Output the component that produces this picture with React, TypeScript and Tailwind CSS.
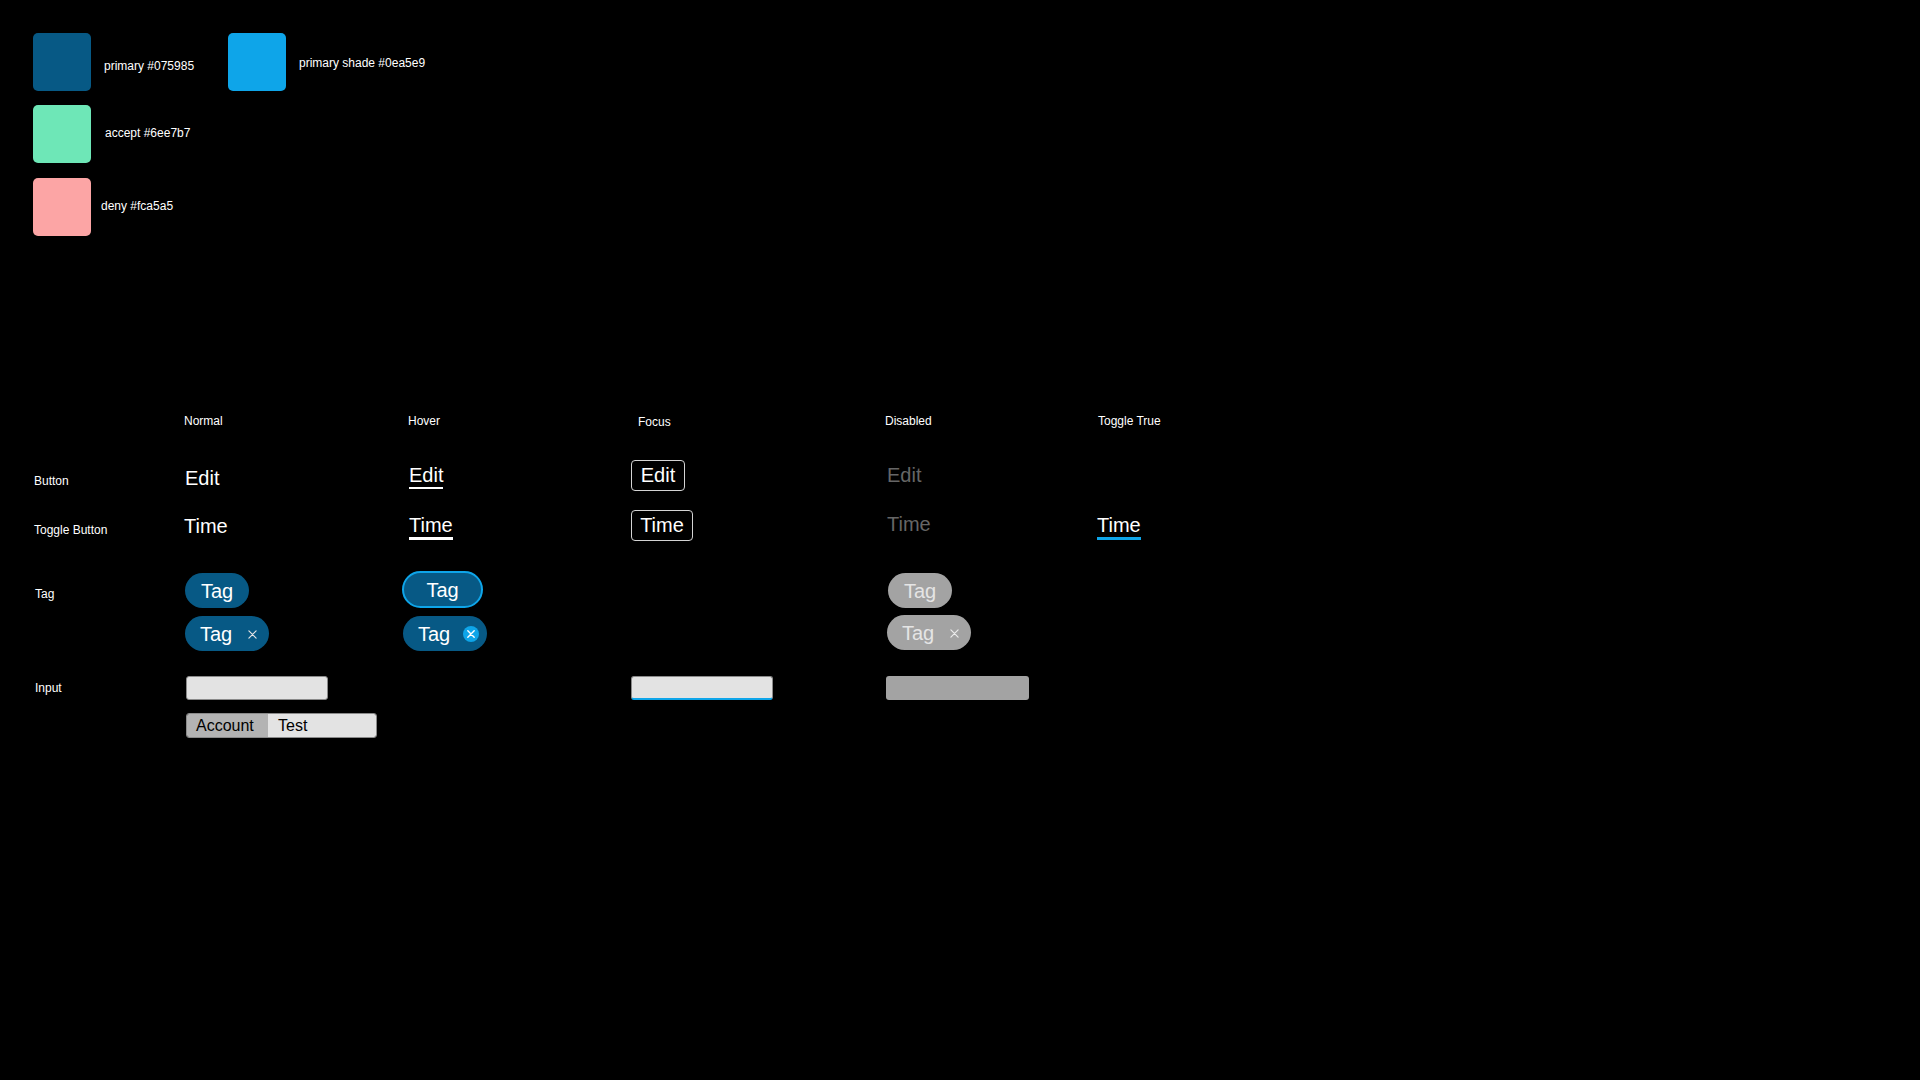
import React from "react";

const XIcon = ({ size = 9, color = "#e5e5e5", stroke = 1.3 }: { size?: number; color?: string; stroke?: number }) => (
  <svg width={size} height={size} viewBox="0 0 10 10" fill="none">
    <path d="M1 1 L9 9 M9 1 L1 9" stroke={color} strokeWidth={stroke} strokeLinecap="round" />
  </svg>
);

const CircleX = () => (
  <svg width={16} height={16} viewBox="0 0 16 16" fill="none">
    <circle cx="8" cy="8" r="8" fill="#0ea5e9" />
    <path d="M4.8 4.8 L11.2 11.2 M11.2 4.8 L4.8 11.2" stroke="#ffffff" strokeWidth={1.4} strokeLinecap="round" />
  </svg>
);

export default function App() {
  return (
    <div className="w-full h-[1080px] bg-black text-white overflow-hidden" style={{ fontFamily: '"Liberation Sans", Arial, sans-serif' }}>
      {/* Swatches */}
      <div className="pt-[33px] pl-[33px] text-[12px] leading-[14px]">
        <div className="flex">
          <div className="flex w-[195px]">
            <div className="w-[58px] h-[58px] rounded-[5px] bg-[#075985]" />
            <div className="ml-[13px] mt-[26px]">primary #075985</div>
          </div>
          <div className="flex">
            <div className="w-[58px] h-[58px] rounded-[5px] bg-[#0ea5e9]" />
            <div className="ml-[13px] mt-[23px]">primary shade #0ea5e9</div>
          </div>
        </div>
        <div className="flex mt-[14px]">
          <div className="w-[58px] h-[58px] rounded-[5px] bg-[#6ee7b7]" />
          <div className="ml-[14px] mt-[21px]">accept #6ee7b7</div>
        </div>
        <div className="flex mt-[15px]">
          <div className="w-[58px] h-[58px] rounded-[5px] bg-[#fca5a5]" />
          <div className="ml-[10px] mt-[21px]">deny #fca5a5</div>
        </div>
      </div>

      {/* States table */}
      <div className="mt-[178px] pl-[34px] grid grid-cols-[150px_224px_222px_256px_211px_auto] grid-rows-[46px_50px_61px_105px_70px] items-start">
        {/* Header */}
        <div />
        <div className="text-[12px] leading-[14px]">Normal</div>
        <div className="text-[12px] leading-[14px]">Hover</div>
        <div className="text-[12px] leading-[14px] ml-[8px] mt-[1px]">Focus</div>
        <div className="text-[12px] leading-[14px] ml-[-1px]">Disabled</div>
        <div className="text-[12px] leading-[14px] ml-[1px]">Toggle True</div>

        {/* Button */}
        <div className="text-[12px] leading-[14px] mt-[14px]">Button</div>
        <div className="mt-[7px] ml-[1px]">
          <span className="text-[20px] leading-[23px] inline-block">Edit</span>
        </div>
        <div className="mt-[4px] ml-[1px]">
          <span className="text-[20px] leading-[23px] inline-block border-b-[2px] border-white">Edit</span>
        </div>
        <div className="ml-[1px]">
          <div className="w-[54px] h-[31px] py-[3px] border border-[#d4d4d4] rounded-[4px] text-[20px] leading-[23px] text-center">Edit</div>
        </div>
        <div className="mt-[4px] ml-[1px]">
          <span className="text-[20px] leading-[23px] inline-block text-[#666666]">Edit</span>
        </div>
        <div />

        {/* Toggle Button */}
        <div className="text-[12px] leading-[14px] mt-[13px]">Toggle Button</div>
        <div className="mt-[5px]">
          <span className="text-[20px] leading-[23px] inline-block">Time</span>
        </div>
        <div className="mt-[4px] ml-[1px]">
          <span className="text-[20px] leading-[23px] inline-block border-b-[3px] border-white">Time</span>
        </div>
        <div className="ml-[1px]">
          <div className="w-[62px] h-[31px] py-[3px] border border-[#d4d4d4] rounded-[4px] text-[20px] leading-[23px] text-center">Time</div>
        </div>
        <div className="mt-[3px] ml-[1px]">
          <span className="text-[20px] leading-[23px] inline-block text-[#666666]">Time</span>
        </div>
        <div className="mt-[4px]">
          <span className="text-[20px] leading-[23px] inline-block border-b-[3px] border-[#0ea5e9]">Time</span>
        </div>

        {/* Tag */}
        <div className="text-[12px] leading-[14px] mt-[16px] ml-[1px]">Tag</div>
        <div className="mt-[2px] ml-[1px] flex flex-col items-start gap-[8px]">
          <div className="w-[64px] h-[35px] rounded-full bg-[#075985] flex items-center justify-center text-[20px] leading-[23px] pt-[1px]">Tag</div>
          <div className="w-[84px] h-[35px] rounded-full bg-[#075985] flex items-center pl-[15px] text-[20px] leading-[23px] pt-[1px]">
            <span>Tag</span>
            <span className="ml-[16px] flex items-center"><XIcon /></span>
          </div>
        </div>
        <div className="ml-[-6px] flex flex-col items-start gap-[8px]">
          <div className="w-[81px] h-[37px] rounded-full bg-[#075985] border-2 border-[#0ea5e9] flex items-center justify-center text-[20px] leading-[23px] pt-[1px]">Tag</div>
          <div className="ml-[1px] w-[84px] h-[35px] rounded-full bg-[#075985] flex items-center pl-[15px] text-[20px] leading-[23px] pt-[1px]">
            <span>Tag</span>
            <span className="ml-[13px] flex items-center"><CircleX /></span>
          </div>
        </div>
        <div />
        <div className="mt-[2px] ml-[1px] flex flex-col items-start gap-[7px]">
          <div className="ml-[1px] w-[64px] h-[35px] rounded-full bg-[#a3a3a3] text-[#e5e5e5] flex items-center justify-center text-[20px] leading-[23px] pt-[1px]">Tag</div>
          <div className="w-[84px] h-[35px] rounded-full bg-[#a3a3a3] text-[#e5e5e5] flex items-center pl-[15px] text-[20px] leading-[23px] pt-[1px]">
            <span>Tag</span>
            <span className="ml-[16px] flex items-center"><XIcon color="#ececec" /></span>
          </div>
        </div>
        <div />

        {/* Input */}
        <div className="text-[12px] leading-[14px] mt-[5px] ml-[1px]">Input</div>
        <div className="ml-[2px] flex flex-col items-start">
          <div className="w-[142px] h-[24px] bg-[#e3e3e3] border border-[#8a8a8a] rounded-[3px]" />
          <div className="mt-[13px] w-[191px] h-[25px] flex rounded-[3px] overflow-hidden border border-[#8a8a8a] text-black text-[16px] leading-[23px]">
            <div className="w-[81px] bg-[#b3b3b3] pl-[9px]">Account</div>
            <div className="flex-1 bg-[#e3e3e3] pl-[10px]">Test</div>
          </div>
        </div>
        <div />
        <div className="ml-[1px]">
          <div className="w-[142px] h-[24px] bg-[#e3e3e3] border border-[#8a8a8a] border-b-2 border-b-[#0ea5e9] rounded-[3px]" />
        </div>
        <div>
          <div className="w-[143px] h-[24px] bg-[#a3a3a3] rounded-[3px]" />
        </div>
        <div />
      </div>
    </div>
  );
}
